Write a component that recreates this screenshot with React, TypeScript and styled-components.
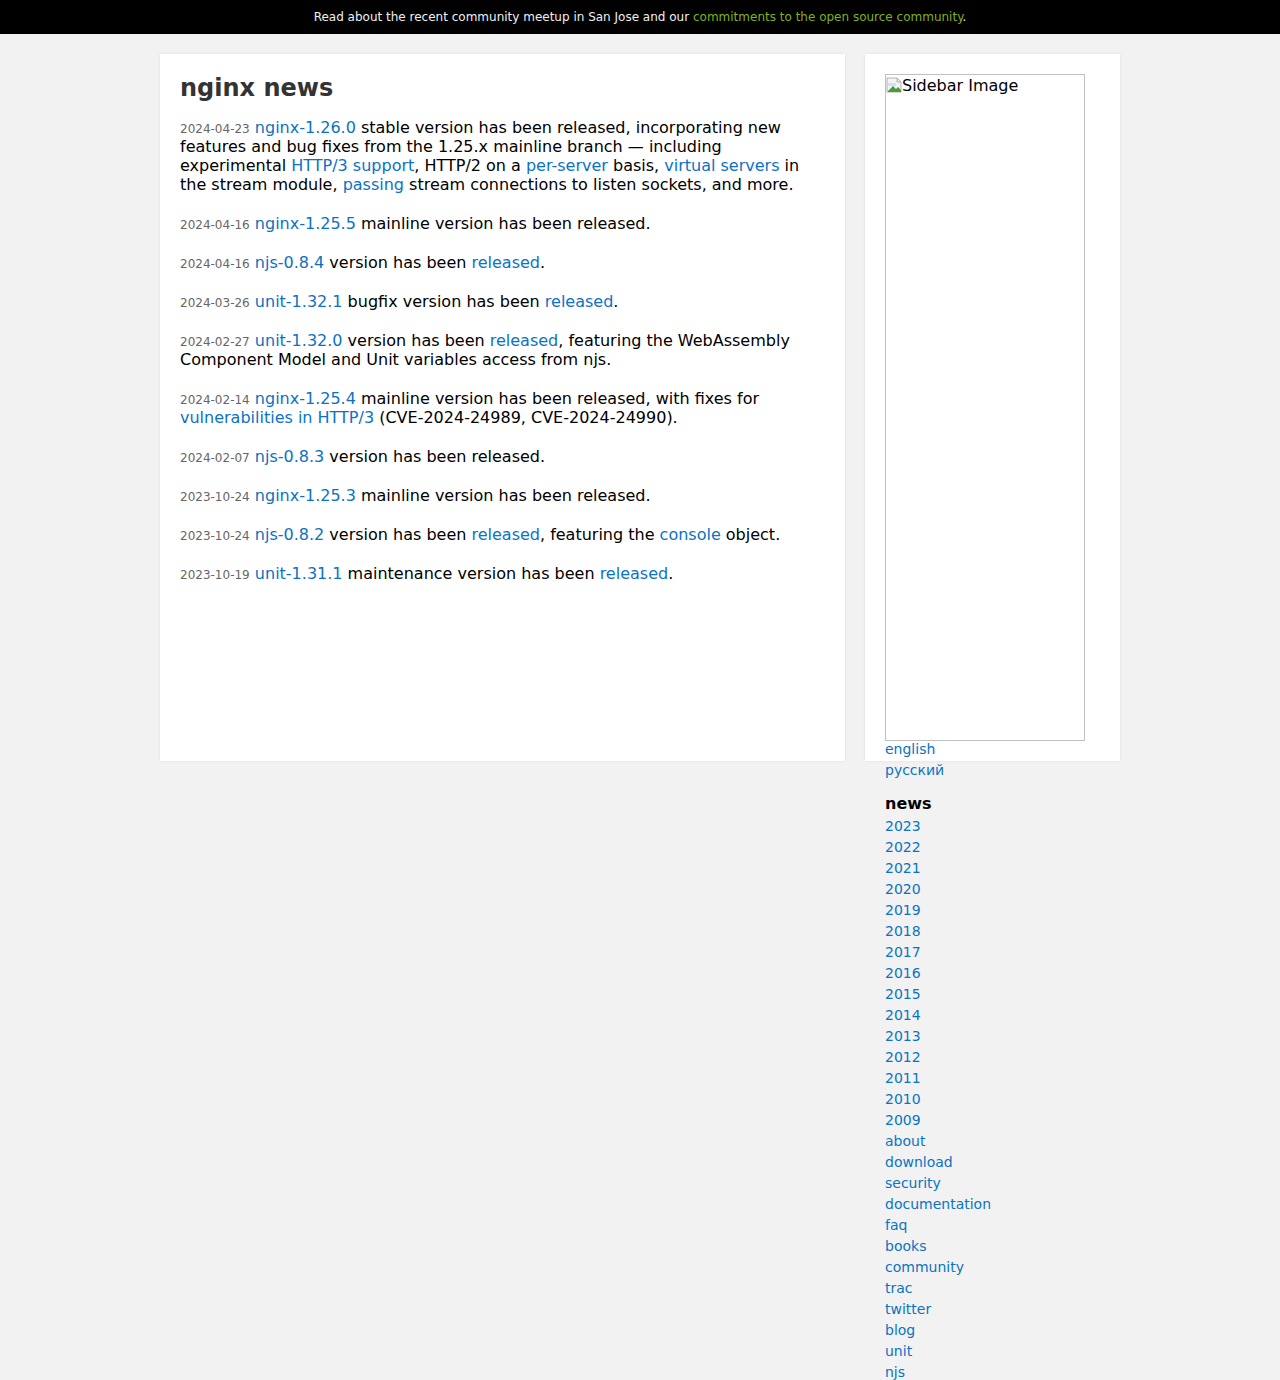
import React from "react";
import styled, { createGlobalStyle } from "styled-components";

const Global = createGlobalStyle`
  html, body { margin: 0; padding: 0; background: #f2f2f2; }
  body { font-family: "DejaVu Sans", "Liberation Sans", sans-serif; color: #000; }
  a { color: #0b72c4; text-decoration: none; }
`;

const Banner = styled.div`
  background: #000;
  color: #f0f0f0;
  height: 34px;
  display: flex;
  align-items: center;
  justify-content: center;
  font-size: 12px;
  a { color: #7fb31a; }
`;

const Wrap = styled.div`
  width: 960px;
  margin: 20px auto 0;
  display: flex;
  gap: 20px;
  align-items: flex-start;
`;

const Main = styled.main`
  width: 685px;
  height: 707px;
  flex: none;
  box-sizing: border-box;
  background: #fff;
  padding: 20px;
  box-shadow: 0 0 3px rgba(0, 0, 0, 0.08);
`;

const Side = styled.aside`
  position: relative;
  z-index: 0;
  width: 255px;
  flex: none;
  box-sizing: border-box;
  padding: 20px;
  &::before {
    content: "";
    position: absolute;
    z-index: -1;
    left: 0;
    top: 0;
    width: 100%;
    height: 707px;
    background: #fff;
    box-shadow: 0 0 3px rgba(0, 0, 0, 0.08);
  }
`;

const Title = styled.h1`
  margin: 0 0 16px;
  font-size: 24px;
  line-height: 28px;
  font-weight: bold;
  color: #333;
`;

const Entry = styled.p`
  margin: 0 0 20px;
  font-size: 16px;
  line-height: 19px;
`;

const Date = styled.span`
  font-size: 12px;
  line-height: 1;
  color: #666;
`;

const ImgBox = styled.div`
  width: 200px;
  height: 667px;
  box-sizing: border-box;
  border: 1px solid #c0c0c0;
  display: flex;
  align-items: flex-start;
  font-size: 16px;
  line-height: 21px;
`;

const Broken = styled.svg`
  flex: none;
  margin-top: 2px;
`;

const Nav = styled.nav`
  display: flex;
  flex-direction: column;
  align-items: flex-start;
  margin-top: -2px;
`;

const NavLink = styled.a`
  display: block;
  font-size: 14px;
  line-height: 21px;
`;

const NavHead = styled.div`
  font-size: 16px;
  font-weight: bold;
  line-height: 21px;
  margin: 12px 0 2px;
`;

const years = ["2023","2022","2021","2020","2019","2018","2017","2016","2015","2014","2013","2012","2011","2010","2009"];
const links = ["about","download","security","documentation","faq","books","community","trac","twitter","blog","unit","njs"];

export default function App() {
  return (
    <>
      <Global />
      <Banner>
        <span>
          Read about the recent community meetup in San Jose and our{" "}
          <a href="#">commitments to the open source community</a>.
        </span>
      </Banner>
      <Wrap>
        <Main>
          <Title>nginx news</Title>
          <Entry>
            <Date>2024-04-23</Date> <a href="#">nginx-1.26.0</a> stable version has been released, incorporating new features and bug fixes from the 1.25.x mainline branch — including experimental <a href="#">HTTP/3 support</a>, HTTP/2 on a <a href="#">per-server</a> basis, <a href="#">virtual servers</a> in the stream module, <a href="#">passing</a> stream connections to listen sockets, and more.
          </Entry>
          <Entry>
            <Date>2024-04-16</Date> <a href="#">nginx-1.25.5</a> mainline version has been released.
          </Entry>
          <Entry>
            <Date>2024-04-16</Date> <a href="#">njs-0.8.4</a> version has been <a href="#">released</a>.
          </Entry>
          <Entry>
            <Date>2024-03-26</Date> <a href="#">unit-1.32.1</a> bugfix version has been <a href="#">released</a>.
          </Entry>
          <Entry>
            <Date>2024-02-27</Date> <a href="#">unit-1.32.0</a> version has been <a href="#">released</a>, featuring the WebAssembly Component Model and Unit variables access from njs.
          </Entry>
          <Entry>
            <Date>2024-02-14</Date> <a href="#">nginx-1.25.4</a> mainline version has been released, with fixes for <a href="#">vulnerabilities in HTTP/3</a> (CVE-2024-24989, CVE-2024-24990).
          </Entry>
          <Entry>
            <Date>2024-02-07</Date> <a href="#">njs-0.8.3</a> version has been released.
          </Entry>
          <Entry>
            <Date>2023-10-24</Date> <a href="#">nginx-1.25.3</a> mainline version has been released.
          </Entry>
          <Entry>
            <Date>2023-10-24</Date> <a href="#">njs-0.8.2</a> version has been <a href="#">released</a>, featuring the <a href="#">console</a> object.
          </Entry>
          <Entry>
            <Date>2023-10-19</Date> <a href="#">unit-1.31.1</a> maintenance version has been <a href="#">released</a>.
          </Entry>
        </Main>
        <Side>
          <ImgBox>
            <Broken width="16" height="16" viewBox="0 0 16 16">
              <path d="M1 1h10l4 4v10H1z" fill="#f4f4f4" stroke="#b0b0b0" strokeWidth="1" />
              <path d="M11 1v4h4" fill="none" stroke="#b0b0b0" />
              <path d="M2 6h8v3H2z" fill="#cfe3f5" />
              <path d="M2 14l5-5 3 3 2-2 3 3v2H2z" fill="#4a9c3a" />
            </Broken>
            <span>Sidebar Image</span>
          </ImgBox>
          <Nav>
            <NavLink href="#">english</NavLink>
            <NavLink href="#">русский</NavLink>
            <NavHead>news</NavHead>
            {years.map((y) => (
              <NavLink key={y} href="#">{y}</NavLink>
            ))}
            {links.map((l) => (
              <NavLink key={l} href="#">{l}</NavLink>
            ))}
          </Nav>
        </Side>
      </Wrap>
    </>
  );
}
